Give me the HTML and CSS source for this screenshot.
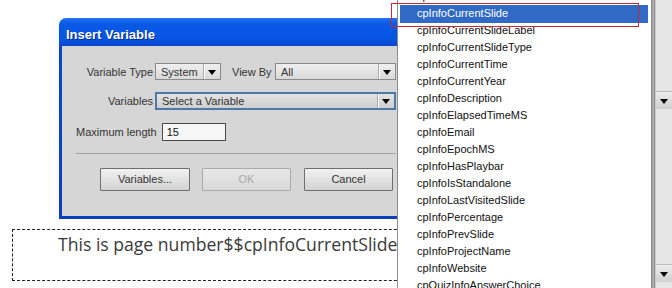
FILE: index.html
```html
<!DOCTYPE html>
<html>
<head>
<meta charset="UTF-8">
<title>Insert Variable</title>
<link rel="stylesheet" href="styles.css">
</head>
<body>
<div id="screen">
	<div id="workspace">
		<div class="dialog">
			<div class="title">Insert Variable</div>
			<div class="dlg_body">
				<div class="row">
					<label class="lbl">Variable Type</label>
					<div class="select sel_type"><span class="val">System</span><span class="arrow"></span></div>
					<label class="lbl_view">View By</label>
					<div class="select sel_view"><span class="val">All</span><span class="arrow"></span></div>
				</div>
				<div class="row row_vars">
					<label class="lbl">Variables</label>
					<div class="select sel_vars"><span class="val">Select a Variable</span><span class="arrow"></span></div>
				</div>
				<div class="row row_len">
					<label class="lbl_len">Maximum length</label>
					<div class="input">15</div>
				</div>
				<div class="sep"></div>
				<div class="buttons">
					<a href="javascript:;" class="btn btn_vars">Variables...</a>
					<a href="javascript:;" class="btn btn_ok disabled">OK</a>
					<a href="javascript:;" class="btn btn_cancel">Cancel</a>
				</div>
			</div>
		</div>
		<div class="caption">This is page number$$cpInfoCurrentSlide$$</div>

		<!-- open variable list, drops over the dialog -->
		<ul class="droplist">
			<li>cpInfoCurrentMonth</li>
			<li class="on">cpInfoCurrentSlide</li>
			<li>cpInfoCurrentSlideLabel</li>
			<li>cpInfoCurrentSlideType</li>
			<li>cpInfoCurrentTime</li>
			<li>cpInfoCurrentYear</li>
			<li>cpInfoDescription</li>
			<li>cpInfoElapsedTimeMS</li>
			<li>cpInfoEmail</li>
			<li>cpInfoEpochMS</li>
			<li>cpInfoHasPlaybar</li>
			<li>cpInfoIsStandalone</li>
			<li>cpInfoLastVisitedSlide</li>
			<li>cpInfoPercentage</li>
			<li>cpInfoPrevSlide</li>
			<li>cpInfoProjectName</li>
			<li>cpInfoWebsite</li>
			<li>cpQuizInfoAnswerChoice</li>
		</ul>
		<div class="mark"></div>
	</div>
	<div id="strip">
		<div class="edge"></div>
		<div class="track">
			<div class="sbtn sbtn_top"><span class="arrow"></span></div>
			<div class="sbtn sbtn_bottom"><span class="arrow"></span></div>
		</div>
	</div>
</div>
</body>
</html>
```

FILE: styles.css
```css
*{margin: 0;padding: 0;box-sizing: border-box;}
ul{list-style: none;}
html,body{background: #fff;}
body{
	font-family: "Liberation Sans", Arial, sans-serif;
	font-size: 11px;
	color: #333;
	overflow: hidden;
}
#screen{
	display: flex;
	width: 672px;
	height: 288px;
}
#workspace{
	position: relative;
	flex: 1;
	padding-top: 18px;
}
/* dialog */
.dialog{
	margin-left: 59px;
	width: 360px;
	padding: 0 3px 3px;
	border-radius: 7px 7px 0 0;
	background: linear-gradient(#2372f4 0, #0a59e6 6px, #0654e2 22px, #0847ca 28px, #0a3fbf 100%);
}
.title{
	height: 28px;
	line-height: 33px;
	padding-left: 4px;
	color: #fff;
	font-weight: bold;
	font-size: 13px;
	text-shadow: 1px 1px 0 #0a2c8a;
}
.dlg_body{
	background: #d6d6d6;
	padding: 17px 0 25px 14px;
}
.row{
	display: flex;
	align-items: center;
}
.lbl{
	width: 77px;
	margin-right: 2px;
	text-align: right;
}
.lbl_view{
	margin-left: 11px;
	width: 41px;
	margin-right: 2px;
}
.lbl_len{
	margin-right: 5px;
}
.select{
	display: flex;
	align-items: center;
	height: 17px;
	border: 1px solid #8a8a8a;
	background: linear-gradient(#efefef, #d9d9d9);
	color: #333;
}
.select .val{
	flex: 1;
	padding-left: 5px;
}
.select .arrow{
	width: 17px;
	height: 100%;
	border-left: 1px solid #aaa;
	box-shadow: inset 1px 0 0 #fff;
	position: relative;
}
.arrow:after{
	content: "";
	position: absolute;
	left: 50%;
	top: 50%;
	margin: -2px 0 0 -4px;
	border-left: 4px solid transparent;
	border-right: 4px solid transparent;
	border-top: 5px solid #000;
}
.sel_type{width: 66px;}
.sel_view{width: 121px;}
.row_vars{margin-top: 12px;}
.sel_vars{
	width: 241px;
	height: 18px;
	border: 2px solid #4c7aa8;
	background: linear-gradient(#e2e2e2, #cfcfcf);
}
.sel_vars .val{padding-left: 5px;}
.row_len{margin-top: 13px;}
.input{
	width: 64px;
	height: 18px;
	line-height: 16px;
	padding-left: 4px;
	border: 1px solid #4a4a4a;
	background: #f6f6f6;
	color: #111;
}
.sep{
	margin-top: 12px;
	width: 320px;
	height: 1px;
	background: #a2a2a2;
}
.buttons{
	display: flex;
	margin-top: 14px;
	padding-left: 24px;
	gap: 12px;
}
.btn{
	display: block;
	width: 90px;
	height: 23px;
	line-height: 21px;
	text-align: center;
	text-decoration: none;
	color: #333;
	border: 1px solid #6e6e6e;
	border-radius: 1px;
	background: linear-gradient(#f2f2f2, #d2d2d2);
}
.btn_ok{width: 89px;}
.btn_cancel{width: 89px;margin-left: 1px;}
.btn.disabled{
	color: #a8a8a8;
	border-color: #ababab;
	background: linear-gradient(#e8e8e8, #d8d8d8);
}
/* text caption on the slide */
.caption{
	margin: 10px 0 0 12px;
	width: 420px;
	height: 52px;
	border: 1px dashed #222;
	padding: 2px 0 0 45px;
	font-family: "Open Sans", "Liberation Sans", sans-serif;
	font-size: 17.6px;
	color: #3a3a3a;
	white-space: nowrap;
	overflow: hidden;
}
/* dropdown list */
.droplist{
	position: absolute;
	left: 397px;
	top: -12px;
	width: 254px;
	height: 310px;
	background: #fff;
	border-left: 1px solid #8c8c8c;
	padding: 0 3px 0 2px;
	color: #111;
}
.droplist li{
	height: 17px;
	line-height: 17px;
	padding-left: 17px;
	white-space: nowrap;
}
.droplist li.on{
	background: #316ac5;
	color: #fff;
	height: 18px;
	margin-bottom: -1px;
}
.mark{
	position: absolute;
	left: 391px;
	top: 3px;
	width: 248px;
	height: 24px;
	border: 1px solid #c8283a;
}
/* right scroll strip */
#strip{
	display: flex;
	width: 21px;
}
.edge{
	width: 4px;
	background: linear-gradient(90deg, #7c7c7c, #b4b4b4 50%, #8a8a8a);
}
.track{
	flex: 1;
	background: #e6e6e6;
	border-left: 1px solid #c8c8c8;
	padding-top: 91px;
}
.sbtn{
	position: relative;
	height: 18px;
	border-top: 1px solid #bcbcbc;
	background: linear-gradient(#ececec, #d0d0d0);
}
.sbtn_bottom{margin-top: 155px;}
```
